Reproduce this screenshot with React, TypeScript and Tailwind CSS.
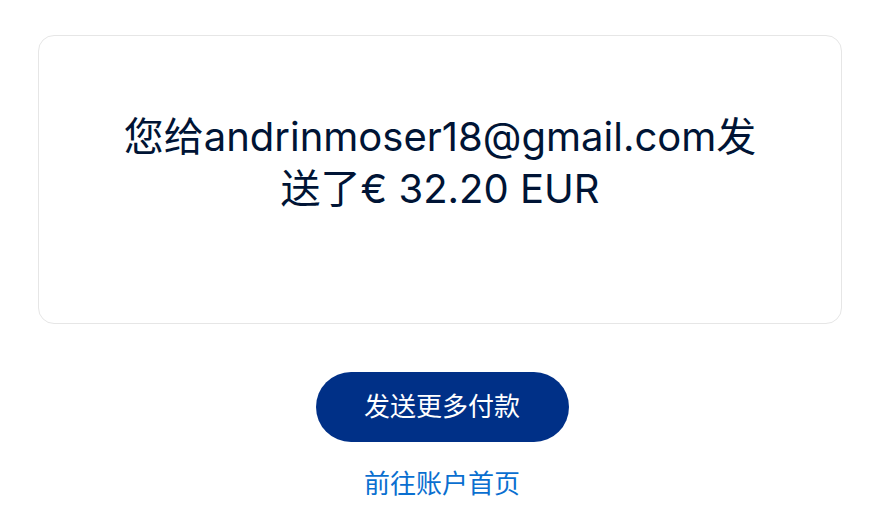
export default function App() {
  return (
    <div
      className="w-[884px] h-[522px] bg-white overflow-hidden"
      style={{ fontFamily: 'Inter, "Noto Sans CJK SC", sans-serif' }}
    >
      <div className="ml-[38px] mt-[35px] w-[804px] h-[289px] rounded-[16px] border border-[#e6e6e6] pt-[75px]">
        <p className="text-center text-[40px] leading-[52px] text-[#001435]">
          您给andrinmoser18@gmail.com发
          <br />
          送了€ 32.20 EUR
        </p>
      </div>

      <div className="flex flex-col items-center">
        <button className="mt-[48px] w-[253px] h-[70px] rounded-full bg-[#003087] text-white text-[26px] leading-none">
          发送更多付款
        </button>
        <a className="mt-[27px] text-[26px] leading-[30px] text-[#0a6fd0]">前往账户首页</a>
      </div>
    </div>
  );
}
